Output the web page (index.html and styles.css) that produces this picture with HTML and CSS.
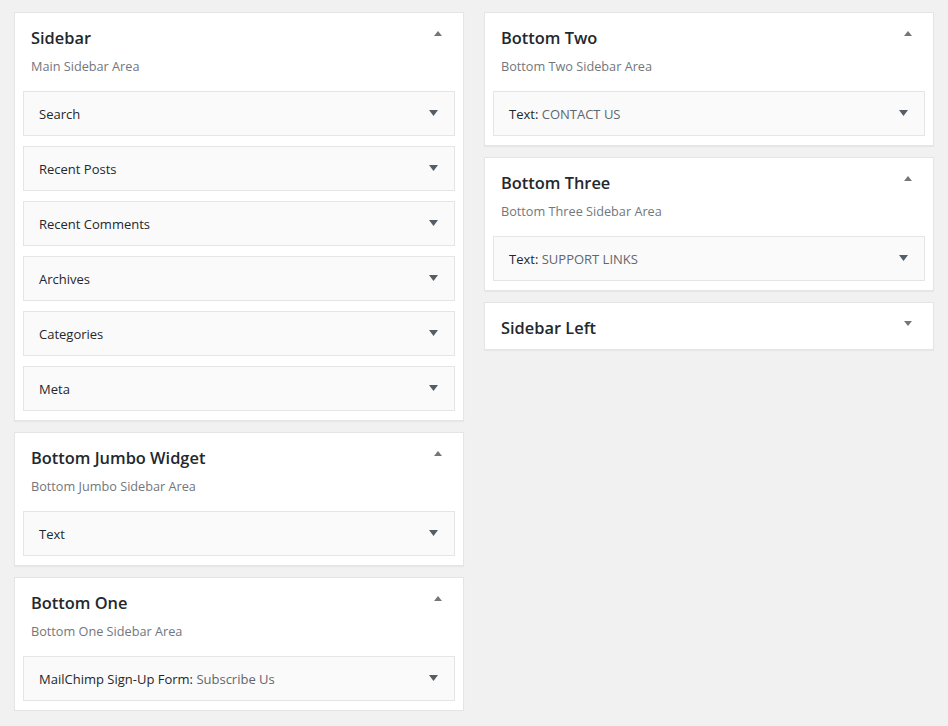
FILE: index.html
```html
<!DOCTYPE html>
<html>
<head>
<meta charset="utf-8">
<link rel="stylesheet" href="styles.css">
</head>
<body>
<div class="columns">
  <div class="column">
    <section class="area">
      <div class="area-head"><h2>Sidebar</h2><svg class="toggle up" viewBox="0 0 8 5"><polygon points="4,0 8,5 0,5"/></svg></div>
      <p class="desc">Main Sidebar Area</p>
      <div class="widgets">
        <div class="widget"><h3>Search</h3><svg class="toggle down" viewBox="0 0 9 6"><polygon points="0,0 9,0 4.5,6"/></svg></div>
        <div class="widget"><h3>Recent Posts</h3><svg class="toggle down" viewBox="0 0 9 6"><polygon points="0,0 9,0 4.5,6"/></svg></div>
        <div class="widget"><h3>Recent Comments</h3><svg class="toggle down" viewBox="0 0 9 6"><polygon points="0,0 9,0 4.5,6"/></svg></div>
        <div class="widget"><h3>Archives</h3><svg class="toggle down" viewBox="0 0 9 6"><polygon points="0,0 9,0 4.5,6"/></svg></div>
        <div class="widget"><h3>Categories</h3><svg class="toggle down" viewBox="0 0 9 6"><polygon points="0,0 9,0 4.5,6"/></svg></div>
        <div class="widget"><h3>Meta</h3><svg class="toggle down" viewBox="0 0 9 6"><polygon points="0,0 9,0 4.5,6"/></svg></div>
      </div>
    </section>
    <section class="area">
      <div class="area-head"><h2>Bottom Jumbo Widget</h2><svg class="toggle up" viewBox="0 0 8 5"><polygon points="4,0 8,5 0,5"/></svg></div>
      <p class="desc">Bottom Jumbo Sidebar Area</p>
      <div class="widgets">
        <div class="widget"><h3>Text</h3><svg class="toggle down" viewBox="0 0 9 6"><polygon points="0,0 9,0 4.5,6"/></svg></div>
      </div>
    </section>
    <section class="area">
      <div class="area-head"><h2>Bottom One</h2><svg class="toggle up" viewBox="0 0 8 5"><polygon points="4,0 8,5 0,5"/></svg></div>
      <p class="desc">Bottom One Sidebar Area</p>
      <div class="widgets">
        <div class="widget"><h3>MailChimp Sign-Up Form: <span class="sub">Subscribe Us</span></h3><svg class="toggle down" viewBox="0 0 9 6"><polygon points="0,0 9,0 4.5,6"/></svg></div>
      </div>
    </section>
  </div>
  <div class="column">
    <section class="area">
      <div class="area-head"><h2>Bottom Two</h2><svg class="toggle up" viewBox="0 0 8 5"><polygon points="4,0 8,5 0,5"/></svg></div>
      <p class="desc">Bottom Two Sidebar Area</p>
      <div class="widgets">
        <div class="widget"><h3>Text: <span class="sub">CONTACT US</span></h3><svg class="toggle down" viewBox="0 0 9 6"><polygon points="0,0 9,0 4.5,6"/></svg></div>
      </div>
    </section>
    <section class="area">
      <div class="area-head"><h2>Bottom Three</h2><svg class="toggle up" viewBox="0 0 8 5"><polygon points="4,0 8,5 0,5"/></svg></div>
      <p class="desc">Bottom Three Sidebar Area</p>
      <div class="widgets">
        <div class="widget"><h3>Text: <span class="sub">SUPPORT LINKS</span></h3><svg class="toggle down" viewBox="0 0 9 6"><polygon points="0,0 9,0 4.5,6"/></svg></div>
      </div>
    </section>
    <section class="area collapsed">
      <div class="area-head"><h2>Sidebar Left</h2><svg class="toggle up closed" viewBox="0 0 8 5"><polygon points="0,0 8,0 4,5"/></svg></div>
    </section>
  </div>
</div>
</body>
</html>
```
FILE: styles.css
```css
html, body {
  margin: 0;
  padding: 0;
  background: #f1f1f1;
}
body {
  font-family: "Open Sans", "Noto Sans", sans-serif;
  color: #23282d;
  padding: 12px 14px 0 14px;
}
.columns {
  display: grid;
  grid-template-columns: 450px 450px;
  column-gap: 20px;
  align-items: start;
}
.column {
  display: flex;
  flex-direction: column;
  gap: 11px;
}
.area {
  background: #fff;
  border: 1px solid #e5e5e5;
  box-shadow: 0 1px 1px rgba(0,0,0,.04);
}
.area-head {
  height: 47px;
  display: flex;
  align-items: center;
  justify-content: space-between;
  padding: 0 21px 0 16px;
}
.area-head h2 {
  margin: 2px 0 0 0;
  font-size: 16.4px;
  font-weight: 600;
  color: #23282d;
}
.collapsed .area-head {
  height: 46px;
}
.toggle {
  display: block;
  flex: none;
}
.toggle.up {
  width: 8px;
  height: 5px;
  fill: #72777c;
  margin-top: -7px;
}
.toggle.closed {
  margin-top: -5px;
}
.desc {
  margin: 0 0 17px 16px;
  height: 14px;
  line-height: 13px;
  font-size: 12.7px;
  color: #72777c;
}
.widgets {
  padding: 0 8px 9px 8px;
  display: flex;
  flex-direction: column;
  gap: 10px;
}
.widget {
  height: 45px;
  box-sizing: border-box;
  background: #fafafa;
  border: 1px solid #e5e5e5;
  display: flex;
  align-items: center;
  justify-content: space-between;
  padding: 0 16px 0 15px;
}
.widget h3 {
  margin: 1px 0 0 0;
  font-size: 13px;
  font-weight: 500;
  color: #23282d;
}
.widget .sub {
  font-weight: 400;
  color: #60676e;
}
.toggle.down {
  width: 9px;
  height: 6px;
  fill: #555d66;
  margin-top: -2px;
}
```
